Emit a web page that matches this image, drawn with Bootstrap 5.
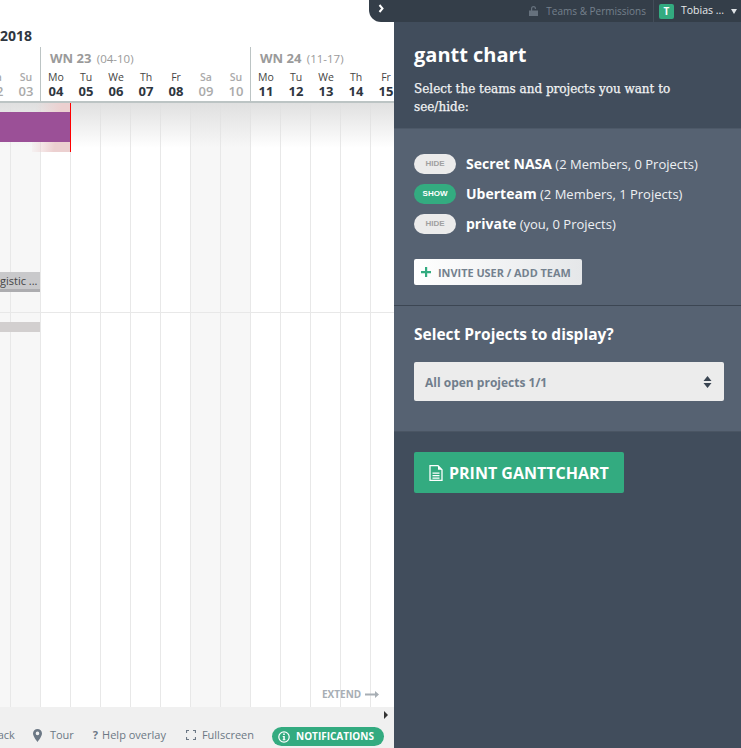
<!DOCTYPE html>
<html lang="en">
<head>
<meta charset="utf-8">
<title>gantt chart</title>
<link href="https://cdn.jsdelivr.net/npm/bootstrap@5.3.0/dist/css/bootstrap.min.css" rel="stylesheet">
<style>
html,body{height:100%;margin:0;overflow:hidden}
body{font-family:"Open Sans","Noto Sans",sans-serif;background:#fff;color:#2f3640}
.app-root{height:748px;width:741px;position:relative}
.gantt-side{width:394px;height:748px;overflow:hidden;position:relative;background:#fff}
.panel-side{width:347px;height:748px;background:#414d5c;color:#fff;padding-top:22px}
.year-row{height:47px;font-size:14px;font-weight:700;line-height:20px;padding-top:26px;color:#2f3640}
.head-area{height:103px;position:relative;z-index:2;background:#fff;border-bottom:2px solid #bcc4c4}
.weeks-row{margin-left:-170px;height:54px}
.wk{width:210px;flex:none;border-left:1px solid #bcc4c4;height:54px}
.wk-title{height:24px;font-size:13px;font-weight:700;color:#9a9a9a;padding:3px 0 0 9px;line-height:16px;white-space:nowrap}
.wk-title span{font-size:11.5px;font-weight:400;margin-left:2px}
.dayc{width:30px;flex:none;text-align:center;font-size:10.5px;line-height:13px;color:#444}
.dayc b{display:block;font-size:13px;line-height:14px;color:#2f3640}
.dayc.off,.dayc.off b{color:#aaa;font-weight:600}
.grid-area{height:604px;margin-left:-169px;position:relative}
.gcol{width:30px;flex:none;border-right:1px solid #e8e8e8;height:100%}
.gcol.wend{background:#f7f7f7}
.grid-shade{position:absolute;left:0;right:0;top:103px;height:45px;background:linear-gradient(#e0e0e0,rgba(255,255,255,0));z-index:1}
.rule-h{position:absolute;left:0;right:0;top:312px;height:1px;background:#e8e8e8;z-index:1}
.bar-blob{position:absolute;left:32px;top:103px;width:38px;height:49px;background:linear-gradient(100deg,rgba(255,255,255,0) 10%,#ecd0d0 65%);z-index:1}
.bar-purple{position:absolute;left:0;top:112px;width:70px;height:30px;background:#9b5097;z-index:2}
.today-line{position:absolute;left:70px;top:103px;width:1px;height:49px;background:#f00;z-index:3}
.bar-grey{position:absolute;left:0;top:272px;width:40px;height:20px;background:#c9c9cb;border-bottom:3px solid #adadb0;font-size:11px;line-height:17px;color:#444;text-align:right;padding-right:3px;overflow:hidden;white-space:nowrap;z-index:2}
.bar-thin{position:absolute;left:0;top:322px;width:40px;height:10px;background:#d2cfcf;z-index:2}
.extend-lbl{position:absolute;left:322px;top:688px;font-size:10px;font-weight:700;line-height:13px;color:#a7aeb4;z-index:2}
.foot-bar{position:absolute;left:0;right:0;top:707px;height:41px;background:#f0f0f0;z-index:3;font-size:11px;color:#6c7885;padding:20px 10px 0 0;white-space:nowrap}
.foot-arrow{position:absolute;right:6px;top:4px;width:0;height:0;border-left:4px solid #333;border-top:4px solid transparent;border-bottom:4px solid transparent}
.foot-link{line-height:16px;flex:none}
.notif-pill{background:#33ab80;color:#fff;font-weight:700;font-size:10px;height:19px;width:112px;flex:none;border-radius:10px;margin-left:18px;padding-left:6px}
.top-strip{position:absolute;left:369px;right:0;top:0;height:22px;background:#343e49;border-bottom-left-radius:12px;z-index:5;font-size:10px;color:#75808c;white-space:nowrap}
.top-chev{margin:4px 0 0 9px;align-self:flex-start}
.top-div{width:1px;height:22px;background:#434d59;margin:0 5px 0 7px}
.avatar-t{width:15px;height:15px;background:#33ab80;color:#fff;font-size:10px;font-weight:700;border-radius:2px;line-height:15px;text-align:center}
.user-nm{color:#e6e8ea;margin-left:7px;width:50px;font-size:10.5px}
.caret-d{width:0;height:0;border-top:5px solid #dfe3e6;border-left:3px solid transparent;border-right:3px solid transparent}
.panel-head{height:107px;padding:19px 20px 0;border-bottom:1px solid #4d5968}
.panel-head h2{font-size:20px;font-weight:700;line-height:27px;margin:0 0 12px}
.panel-head p{font-family:"DejaVu Serif",serif;font-size:12px;line-height:18px;margin:0;color:#f2f3f4;-webkit-text-stroke:.25px #f2f3f4}
.panel-sec{background:#566272;padding:25px 20px 0;height:177px;border-bottom:1px solid #3c4653}
.panel-sec2{background:#566272;padding:17px 17px 0 20px;height:126px;border-bottom:1px solid #4a5563}
.team-row{height:20px;margin-bottom:10px;font-size:13px;line-height:20px;white-space:nowrap;color:#eef0f2}
.team-row b{font-size:14px;color:#fff}
.togl{width:42px;height:20px;border-radius:10px;font-size:8px;font-weight:700;text-align:center;line-height:20px;margin-right:10px;background:#ebebeb;color:#a0a0a0;flex:none;font-family:"Liberation Sans",sans-serif}
.togl.on{background:#33ab80;color:#fff}
.invite-btn{width:168px;height:26px;margin-top:25px;background:linear-gradient(90deg,#fff,#e5e7e9);border-radius:2px;font-size:10.9px;font-weight:700;color:#74818e;padding:0 0 0 7px;white-space:nowrap}
.invite-lbl{padding-top:2px}
.sec-ttl{font-size:15.5px;font-weight:700;line-height:22px;margin:0 0 17px}
.sel-box{height:39px;background:#ececec;border-radius:2px;padding:0 12px 0 11px;font-size:12px;font-weight:700;color:#717e8c}
.sel-lbl{padding-top:2px}
.print-btn{width:210px;height:41px;margin:20px 0 0 20px;background:#33ab80;border-radius:2px;color:#fff;font-size:16px;font-weight:700;padding-left:15px;white-space:nowrap}
</style>
</head>
<body>
<div class="app-root d-flex">
  <div class="gantt-side">
    <div class="head-area">
      <div class="year-row">2018</div>
      <div class="weeks-row d-flex">
        <div class="wk">
          <div class="wk-title">WN 22 <span>(28-03)</span></div>
          <div class="d-flex"><div class="dayc">Mo<b>28</b></div><div class="dayc">Tu<b>29</b></div><div class="dayc">We<b>30</b></div><div class="dayc">Th<b>31</b></div><div class="dayc">Fr<b>01</b></div><div class="dayc off">Sa<b>02</b></div><div class="dayc off">Su<b>03</b></div></div>
        </div>
        <div class="wk">
          <div class="wk-title">WN 23 <span>(04-10)</span></div>
          <div class="d-flex"><div class="dayc">Mo<b>04</b></div><div class="dayc">Tu<b>05</b></div><div class="dayc">We<b>06</b></div><div class="dayc">Th<b>07</b></div><div class="dayc">Fr<b>08</b></div><div class="dayc off">Sa<b>09</b></div><div class="dayc off">Su<b>10</b></div></div>
        </div>
        <div class="wk">
          <div class="wk-title">WN 24 <span>(11-17)</span></div>
          <div class="d-flex"><div class="dayc">Mo<b>11</b></div><div class="dayc">Tu<b>12</b></div><div class="dayc">We<b>13</b></div><div class="dayc">Th<b>14</b></div><div class="dayc">Fr<b>15</b></div><div class="dayc off">Sa<b>16</b></div><div class="dayc off">Su<b>17</b></div></div>
        </div>
      </div>
    </div>
    <div class="grid-area d-flex">
      <div class="gcol"></div><div class="gcol"></div><div class="gcol"></div><div class="gcol"></div><div class="gcol"></div><div class="gcol wend"></div><div class="gcol wend"></div>
      <div class="gcol"></div><div class="gcol"></div><div class="gcol"></div><div class="gcol"></div><div class="gcol"></div><div class="gcol wend"></div><div class="gcol wend"></div>
      <div class="gcol"></div><div class="gcol"></div><div class="gcol"></div><div class="gcol"></div><div class="gcol"></div><div class="gcol"></div>
    </div>
    <div class="grid-shade"></div>
    <div class="rule-h"></div>
    <div class="bar-blob"></div>
    <div class="bar-purple"></div>
    <div class="today-line"></div>
    <div class="bar-grey">gistic ...</div>
    <div class="bar-thin"></div>
    <div class="extend-lbl d-flex align-items-center">EXTEND
      <svg width="14" height="7" viewBox="0 0 14 7" class="ms-1"><path d="M0 2.500h10V0l4 3.500L10 7V4.500H0z" fill="#a7aeb4"/></svg>
    </div>
    <div class="foot-bar d-flex justify-content-end align-items-start">
      <div class="foot-arrow"></div>
      <span class="foot-link">Feedback</span>
      <span class="foot-link d-flex align-items-center" style="margin-left:18px">
        <svg width="9" height="13" viewBox="0 0 9 13" class="me-2"><path d="M4.500 0A4.500 4.500 0 0 0 0 4.500C0 7.500 4.500 13 4.500 13S9 7.500 9 4.500A4.500 4.500 0 0 0 4.500 0zm0 6.200a1.800 1.800 0 1 1 0-3.600 1.800 1.800 0 0 1 0 3.600z" fill="#6c7885"/></svg>Tour</span>
      <span class="foot-link" style="margin-left:19px"><b class="me-1">?</b>Help overlay</span>
      <span class="foot-link d-flex align-items-center" style="margin-left:20px">
        <svg width="10" height="10" viewBox="0 0 10 10" style="margin-right:6px"><path d="M.5 3V.5H3M7 .5h2.500V3M9.500 7v2.500H7M3 9.500H.5V7" fill="none" stroke="#6c7885" stroke-width="1.200"/></svg>Fullscreen</span>
      <span class="notif-pill d-flex align-items-center">
        <svg width="12" height="12" viewBox="0 0 12 12" style="margin-right:6px"><circle cx="6" cy="6" r="5.200" fill="none" stroke="#fff" stroke-width="1.200"/><path d="M5.200 2.600h1.600v1.500H5.200zM4.700 5h2.100v3.200h.6v1H4.700v-1h.6V6h-.6z" fill="#fff"/></svg>
        <span>NOTIFICATIONS</span>
      </span>
    </div>
  </div>

  <div class="top-strip d-flex align-items-center">
    <svg class="top-chev" width="7" height="9" viewBox="0 0 7 9"><path d="M1.500 1l3 3.500-3 3.500" fill="none" stroke="#fff" stroke-width="2"/></svg>
    <span class="ms-auto d-flex align-items-center">
      <svg width="9" height="10" viewBox="0 0 9 10" class="me-2"><path d="M0 4.500h9V10H0zM2 4.500V2.500a2.500 2.500 0 0 1 5 0v.5H5.800v-.5a1.300 1.300 0 0 0-2.600 0v2z" fill="#66717d"/></svg>
      Teams &amp; Permissions
    </span>
    <span class="top-div"></span>
    <span class="avatar-t">T</span>
    <span class="user-nm">Tobias ...</span>
    <span class="caret-d"></span>
    <span style="width:4px"></span>
  </div>

  <div class="panel-side">
    <div class="panel-head">
      <h2>gantt chart</h2>
      <p>Select the teams and projects you want to see/hide:</p>
    </div>
    <div class="panel-sec">
      <div class="team-row d-flex"><span class="togl">HIDE</span><span><b>Secret NASA</b> (2 Members, 0 Projects)</span></div>
      <div class="team-row d-flex"><span class="togl on">SHOW</span><span><b>Uberteam</b> (2 Members, 1 Projects)</span></div>
      <div class="team-row d-flex"><span class="togl">HIDE</span><span><b>private</b> (you, 0 Projects)</span></div>
      <div class="invite-btn d-flex align-items-center">
        <svg width="10" height="10" viewBox="0 0 10 10" style="margin-right:7px"><path d="M4 0h2.200v4H10v2.200H6.200V10H4V6.200H0V4h4z" fill="#33ab80"/></svg>
        <span class="invite-lbl">INVITE USER / ADD TEAM</span>
      </div>
    </div>
    <div class="panel-sec2">
      <div class="sec-ttl">Select Projects to display?</div>
      <div class="sel-box d-flex align-items-center justify-content-between">
        <span class="sel-lbl">All open projects 1/1</span>
        <svg width="9" height="12" viewBox="0 0 9 12"><path d="M4.500 0l4 5H.5zM4.500 12l-4-5h8z" fill="#3a4552"/></svg>
      </div>
    </div>
    <div class="print-btn d-flex align-items-center">
      <svg width="14" height="16" viewBox="0 0 14 16" style="margin-right:6px"><path d="M1 .7h8l4 4v10.600H1z" fill="none" stroke="#fff" stroke-width="1.300"/><path d="M9 .7v4h4M3.500 7.500h7v1.300h-7zM3.500 10h7v1.300h-7zM3.500 12.500h7v1.300h-7z" fill="#fff" stroke="none"/></svg>
      PRINT GANTTCHART
    </div>
  </div>
</div>
<script src="https://cdn.jsdelivr.net/npm/bootstrap@5.3.0/dist/js/bootstrap.bundle.min.js"></script>
</body>
</html>
